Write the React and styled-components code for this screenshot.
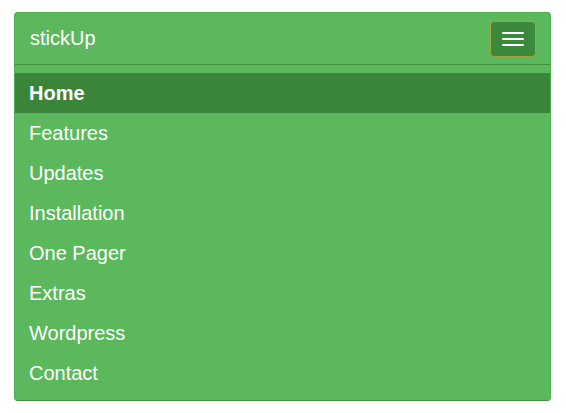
import React from "react";
import styled, { createGlobalStyle } from "styled-components";

const GlobalStyle = createGlobalStyle`
  html, body {
    margin: 0;
    padding: 0;
    background: #ffffff;
    font-family: "Liberation Sans", Arial, sans-serif;
  }
`;

const Page = styled.div`
  padding: 12px 15px 12px 14px;
`;

const Navbar = styled.nav`
  background: #5cb85c;
  border: 1px solid #4cae4c;
  border-bottom-color: #3e8e3e;
  border-radius: 4px;
  overflow: hidden;
`;

const Header = styled.div`
  display: flex;
  align-items: center;
  justify-content: space-between;
  height: 51px;
  padding: 0 14px 0 15px;
  border-bottom: 1px solid #3f8f3f;
`;

const Brand = styled.a`
  color: #ffffff;
  font-size: 20px;
  text-decoration: none;
`;

const Toggle = styled.button`
  display: flex;
  flex-direction: column;
  justify-content: center;
  align-items: center;
  gap: 4px;
  width: 46px;
  height: 36px;
  box-sizing: border-box;
  padding: 0;
  background: #3b8a3b;
  border: 1px solid #a3a63a;
  border-radius: 4px;
  cursor: pointer;
`;

const Bar = styled.span`
  display: block;
  width: 22px;
  height: 2px;
  border-radius: 1px;
  background: #ffffff;
`;

const Menu = styled.ul`
  list-style: none;
  margin: 0;
  padding: 8px 0 7px;
`;

const Item = styled.li`
  display: flex;
  align-items: center;
  height: 40px;
  padding: 0 15px 0 14px;
  background: ${(p) => (p.$active ? "#3a853a" : "transparent")};
  font-weight: ${(p) => (p.$active ? 700 : 400)};
  font-size: 20px;
  color: #ffffff;
`;

const items = [
  "Home",
  "Features",
  "Updates",
  "Installation",
  "One Pager",
  "Extras",
  "Wordpress",
  "Contact",
];

export default function App() {
  return (
    <Page>
      <GlobalStyle />
      <Navbar>
        <Header>
          <Brand href="#">stickUp</Brand>
          <Toggle aria-label="Toggle navigation">
            <Bar />
            <Bar />
            <Bar />
          </Toggle>
        </Header>
        <Menu>
          {items.map((name, i) => (
            <Item key={name} $active={i === 0}>
              {name}
            </Item>
          ))}
        </Menu>
      </Navbar>
    </Page>
  );
}
